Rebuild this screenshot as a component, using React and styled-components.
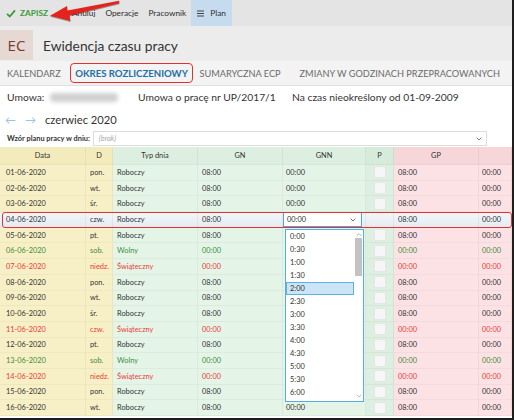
import React from "react";
import styled, { createGlobalStyle, css } from "styled-components";

const Global = createGlobalStyle`
  html, body { margin: 0; padding: 0; background: #fff; }
  body { font-family: Lato, "Open Sans", sans-serif; }
  * { box-sizing: border-box; }
`;

const Frame = styled.div`
  position: relative;
  width: 514px;
  height: 420px;
  overflow: hidden;
  background: #ececec;
  border-right: 2px solid #1e1e1e;
  border-bottom: 2px solid #1e1e1e;
  display: flex;
  flex-direction: column;
`;

const Toolbar = styled.div`
  height: 26px;
  flex: none;
  display: flex;
  align-items: stretch;
  background: #e4e4e4;
  padding-left: 1px;
`;

const ToolButton = styled.div`
  display: flex;
  align-items: center;
  gap: ${(p) => (p.$active ? 6 : 4)}px;
  padding: 0 ${(p) => (p.$active ? 6 : 5)}px;
  font-size: 8.3px;
  white-space: nowrap;
  color: ${(p) => (p.$save ? "#3b9a3b" : "#2e2e2e")};
  font-weight: ${(p) => (p.$save ? 700 : 400)};
  background: ${(p) => (p.$active ? "#c6dcee" : "transparent")};
`;

const ArrowMark = styled.svg`
  position: absolute;
  left: 0;
  top: 0;
  filter: drop-shadow(0.5px 1px 0.6px rgba(0, 0, 0, 0.35));
`;

const Header = styled.div`
  height: 35px;
  flex: none;
  display: flex;
  align-items: center;
  gap: 10px;
  padding-top: 3px;
  background: #ececec;
`;

const Badge = styled.div`
  width: 33px;
  height: 30px;
  display: flex;
  align-items: center;
  justify-content: center;
  background: #e6d8d2;
  color: #7a3a2c;
  font-size: 15px;
  font-family: "Open Sans", sans-serif;
`;

const Title = styled.div`
  font-size: 13.8px;
  color: #333;
`;

const Body = styled.div`
  flex: 1;
  background: #fff;
  display: flex;
  flex-direction: column;
`;

const Tabs = styled.div`
  height: 25px;
  flex: none;
  display: flex;
  align-items: center;
  background: #f3f3f3;
  border-bottom: 1px solid #e0e0e0;
  padding-left: 1px;
`;

const Tab = styled.div`
  height: 20px;
  flex: none;
  white-space: nowrap;
  display: flex;
  align-items: center;
  padding: 0 ${(p) => (p.$active ? 4.5 : 6)}px;
  margin-right: ${(p) => p.$mr || 0}px;
  font-size: ${(p) => (p.$active ? 9.6 : 9.2)}px;
  color: ${(p) => (p.$active ? "#1d6fa7" : "#6b6b6b")};
  font-weight: ${(p) => (p.$active ? 700 : 400)};
  ${(p) =>
    p.$active &&
    css`
      border: 1.5px solid #e5302d;
      border-radius: 4px;
    `}
`;

const InfoRow = styled.div`
  height: 22px;
  flex: none;
  display: grid;
  grid-template-columns: 43px 88px 154px auto;
  align-items: center;
  padding-left: 7px;
  font-size: 10.3px;
  color: #333;
  white-space: nowrap;
`;

const Blur = styled.div`
  width: 68px;
  height: 9px;
  background: #cfcfcf;
  border-radius: 4px;
  filter: blur(2.2px);
`;

const Spacer = styled.span`
  display: inline-block;
  flex: none;
  width: ${(p) => p.$w}px;
`;

const MonthRow = styled.div`
  height: 22px;
  flex: none;
  display: flex;
  align-items: center;
  padding-left: 5px;
  gap: 8px;
  font-size: 11.2px;
  color: #333;
`;

const NavArrow = styled.span`
  color: #9cc4e2;
  font-size: 11px;
  width: 12px;
`;

const PlanRow = styled.div`
  height: 17px;
  flex: none;
  display: flex;
  align-items: center;
  padding-left: 7px;
  gap: 3px;
`;

const PlanLabel = styled.div`
  font-size: 7.4px;
  font-weight: 700;
  color: #333;
  white-space: nowrap;
`;

const PlanSelect = styled.div`
  width: 394px;
  height: 15px;
  border: 1px solid #dcdcdc;
  background: #fff;
  display: flex;
  align-items: center;
  justify-content: space-between;
  padding: 0 4px 0 5px;
  font-size: 7.4px;
  font-style: italic;
  color: #aaa;
`;

const Table = styled.div`
  position: relative;
  display: flex;
  flex-direction: column;
`;

const COLS = "86px 27px 85px 85px 83px 28px 85px 1fr";

const Row = styled.div`
  display: grid;
  grid-template-columns: ${COLS};
  height: ${(p) => (p.$head ? 18 : 15.7)}px;
  flex: none;
  position: relative;
  ${(p) =>
    p.$selected &&
    css`
      &::after {
        content: "";
        position: absolute;
        inset: -0.5px 0 0 2px;
        border: 1.5px solid #e3322f;
        border-radius: 3px;
        pointer-events: none;
      }
    `}
`;

const bgs = {
  yellow: ["#f4ebbd", "#f7f0c7"],
  green: ["#dcefe0", "#e4f5e8"],
  greenDark: ["#d6ebda", "#dcefe0"],
  pink: ["#f7d6d9", "#fde2e5"],
};

const tones = {
  normal: "#333",
  free: "#3f8b3c",
  holiday: "#ee3b37",
};

const Cell = styled.div`
  display: flex;
  align-items: center;
  justify-content: ${(p) => (p.$head ? "center" : "flex-start")};
  padding-left: ${(p) => (p.$head ? 0 : p.$pad ?? 4)}px;
  font-size: 7.4px;
  color: ${(p) => tones[p.$tone || "normal"]};
  background: ${(p) =>
    p.$selected
      ? "linear-gradient(#f3f6f9, #e4ecf2)"
      : bgs[p.$bg][p.$head ? 0 : 1]};
  border-right: 1px solid rgba(0, 0, 0, 0.045);
  border-bottom: 1px solid rgba(0, 0, 0, 0.035);
  white-space: nowrap;
  overflow: hidden;
`;

const Check = styled.div`
  width: 12px;
  height: 12px;
  margin-left: 3px;
  background: #f6f6f6;
  border: 1px solid #e6e6e6;
`;

const EditBox = styled.div`
  width: 100%;
  height: 100%;
  background: #fff;
  border: 1px solid #4ea6de;
  display: flex;
  align-items: center;
  justify-content: space-between;
  padding: 0 5px 0 3px;
  margin-left: -3px;
  font-size: 7.4px;
  color: #333;
`;

const Dropdown = styled.div`
  position: absolute;
  left: 285px;
  top: 82px;
  width: 79px;
  height: 173px;
  background: #fff;
  border: 1px solid #58addf;
  display: flex;
  z-index: 2;
`;

const List = styled.div`
  flex: 1;
  display: flex;
  flex-direction: column;
`;

const Item = styled.div`
  height: 13px;
  flex: none;
  display: flex;
  align-items: center;
  padding-left: 4px;
  font-size: 7.4px;
  color: #333;
  ${(p) =>
    p.$sel &&
    css`
      background: #cce5f6;
      border: 1px solid #5db0e0;
      padding-left: 3px;
    `}
`;

const ScrollBar = styled.div`
  width: 9px;
  display: flex;
  flex-direction: column;
  align-items: center;
  padding: 3px 0 3px;
`;

const Thumb = styled.div`
  width: 7px;
  height: 38px;
  margin-top: 1px;
  background: #c2c2c2;
`;

const Fill = styled.div`
  flex: 1;
`;

const Chevron = ({ up, size = 6, color = "#888" }) => (
  <svg width={size} height={size * 0.6} viewBox="0 0 10 6">
    <polyline
      points={up ? "1,5 5,1 9,5" : "1,1 5,5 9,1"}
      fill="none"
      stroke={color}
      strokeWidth="1.3"
    />
  </svg>
);

const rows = [
  ["01-06-2020", "pon.", "R"],
  ["02-06-2020", "wt.", "R"],
  ["03-06-2020", "śr.", "R"],
  ["04-06-2020", "czw.", "R", true],
  ["05-06-2020", "pt.", "R"],
  ["06-06-2020", "sob.", "W"],
  ["07-06-2020", "niedz.", "S"],
  ["08-06-2020", "pon.", "R"],
  ["09-06-2020", "wt.", "R"],
  ["10-06-2020", "śr.", "R"],
  ["11-06-2020", "czw.", "S"],
  ["12-06-2020", "pt.", "R"],
  ["13-06-2020", "sob.", "W"],
  ["14-06-2020", "niedz.", "S"],
  ["15-06-2020", "pon.", "R"],
  ["16-06-2020", "wt.", "R"],
];

const types = {
  R: { label: "Roboczy", tone: "normal", h: "08:00" },
  W: { label: "Wolny", tone: "free", h: "00:00" },
  S: { label: "Świąteczny", tone: "holiday", h: "00:00" },
};

const hours = ["0:00", "0:30", "1:00", "1:30", "2:00", "2:30", "3:00", "3:30", "4:00", "4:30", "5:00", "5:30", "6:00"];

export default function App() {
  return (
    <>
      <Global />
      <Frame>
        <Toolbar>
          <ToolButton $save>
            <svg width="10" height="9" viewBox="0 0 10 9">
              <polyline points="1,4.8 3.8,7.5 9,1.3" fill="none" stroke="#3b9a3b" strokeWidth="1.8" />
            </svg>
            ZAPISZ
          </ToolButton>
          <Spacer $w={14} />
          <ToolButton>Anuluj</ToolButton>
          <ToolButton>Operacje</ToolButton>
          <ToolButton>Pracownik</ToolButton>
          <ToolButton $active>
            <svg width="7" height="7" viewBox="0 0 7 7">
              <path d="M0 1h7M0 3.5h7M0 6h7" stroke="#333" strokeWidth="0.9" />
            </svg>
            Plan
          </ToolButton>
        </Toolbar>
        <ArrowMark width="130" height="26" viewBox="0 0 130 26">
          <polygon
            points="50,15.8 67,6 67.5,10.5 119,0.8 119.5,3.2 69.5,15.5 70.5,21"
            fill="#e5231d"
          />
        </ArrowMark>
        <Header>
          <Badge>EC</Badge>
          <Title>Ewidencja czasu pracy</Title>
        </Header>
        <Body>
          <Tabs>
            <Tab $mr={3}>KALENDARZ</Tab>
            <Tab $active $mr={0}>OKRES ROZLICZENIOWY</Tab>
            <Tab $mr={7}>SUMARYCZNA ECP</Tab>
            <Tab>ZMIANY W GODZINACH PRZEPRACOWANYCH</Tab>
          </Tabs>
          <InfoRow>
            <span>Umowa:</span>
            <Blur />
            <span>Umowa o pracę nr UP/2017/1</span>
            <span>Na czas nieokreślony od 01-09-2009</span>
          </InfoRow>
          <MonthRow>
            <NavArrow>←</NavArrow>
            <NavArrow>→</NavArrow>
            czerwiec 2020
          </MonthRow>
          <PlanRow>
            <PlanLabel>Wzór planu pracy w dniu:</PlanLabel>
            <PlanSelect>
              (brak)
              <Chevron size={6} color="#555" />
            </PlanSelect>
          </PlanRow>
          <Table>
            <Row $head>
              <Cell $head $bg="yellow">Data</Cell>
              <Cell $head $bg="yellow">D</Cell>
              <Cell $head $bg="green">Typ dnia</Cell>
              <Cell $head $bg="green">GN</Cell>
              <Cell $head $bg="green">GNN</Cell>
              <Cell $head $bg="greenDark">P</Cell>
              <Cell $head $bg="pink">GP</Cell>
              <Cell $head $bg="pink"></Cell>
            </Row>
            {rows.map(([date, day, t, sel], i) => {
              const ty = types[t];
              const underList = i >= 4 && i <= 14;
              return (
                <Row key={date} $selected={sel}>
                  <Cell $bg="yellow" $pad={6} $tone={ty.tone} $selected={sel}>{date}</Cell>
                  <Cell $bg="yellow" $tone={ty.tone} $selected={sel}>{day}</Cell>
                  <Cell $bg="green" $tone={ty.tone} $selected={sel}>{ty.label}</Cell>
                  <Cell $bg="green" $tone={ty.tone} $selected={sel}>{ty.h}</Cell>
                  <Cell $bg="green" $pad={3} $selected={sel}>
                    {sel ? (
                      <EditBox>
                        00:00
                        <Chevron size={6} color="#444" />
                      </EditBox>
                    ) : underList ? null : (
                      "00:00"
                    )}
                  </Cell>
                  <Cell $bg="greenDark" $pad={5} $selected={sel}>
                    {!sel && <Check />}
                  </Cell>
                  <Cell $bg="pink" $tone={ty.tone} $selected={sel}>{ty.h}</Cell>
                  <Cell $bg="pink" $pad={3} $tone={ty.tone} $selected={sel}>00:00</Cell>
                </Row>
              );
            })}
            <Dropdown>
              <List>
                {hours.map((h) => (
                  <Item key={h} $sel={h === "2:00"}>{h}</Item>
                ))}
              </List>
              <ScrollBar>
                <Chevron up size={6} color="#999" />
                <Thumb />
                <Fill />
                <Chevron size={6} color="#aaa" />
              </ScrollBar>
            </Dropdown>
          </Table>
        </Body>
      </Frame>
    </>
  );
}
